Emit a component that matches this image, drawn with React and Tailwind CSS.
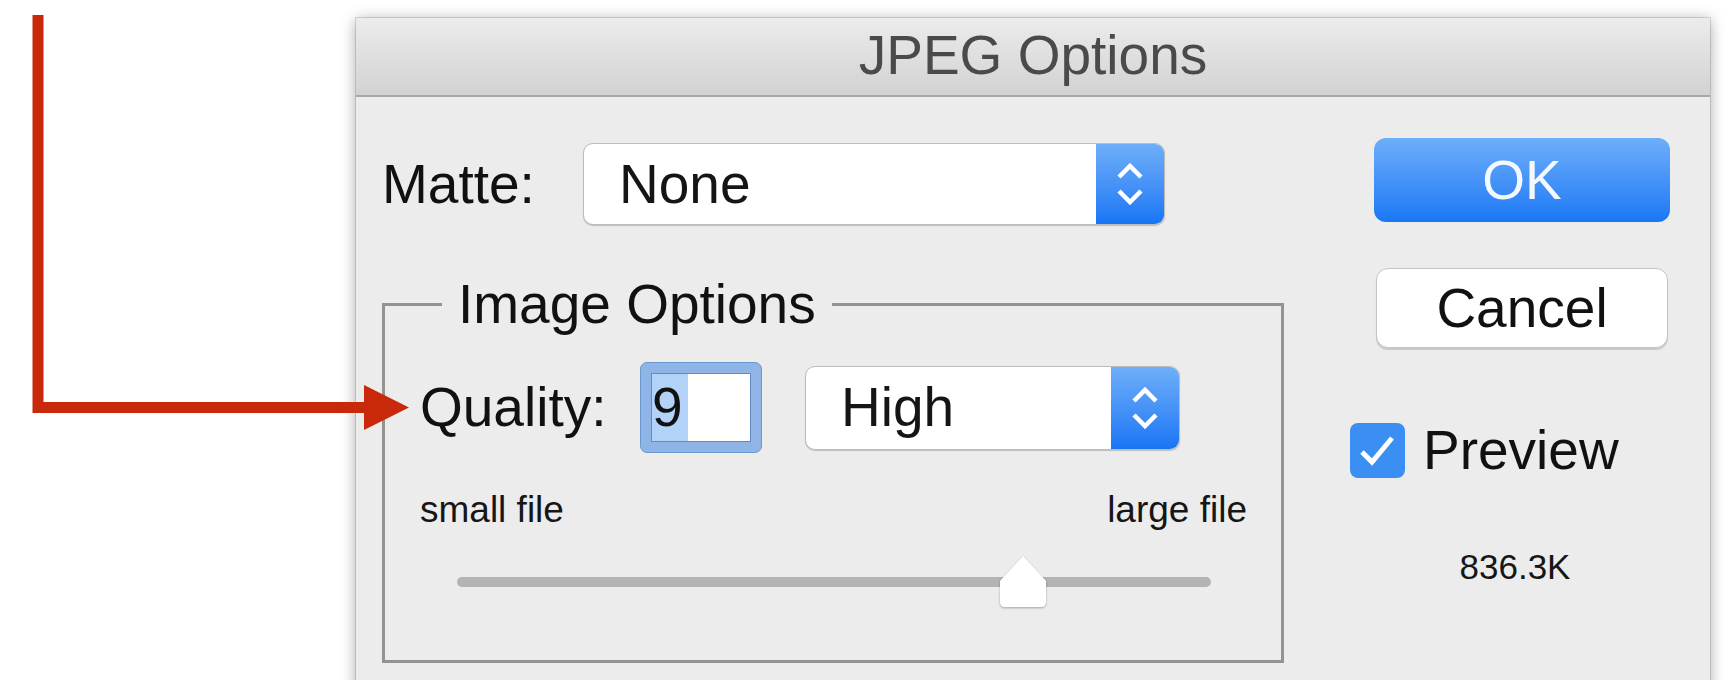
import React from 'react';

const QUALITY = 9;
const QUALITY_MAX = 12;

function Stepper() {
  return (
    <svg width="28" height="44" viewBox="0 0 28 44" fill="none">
      <path d="M3 15 L14 4 L25 15" stroke="white" strokeWidth="4.5" />
      <path d="M3 29 L14 40 L25 29" stroke="white" strokeWidth="4.5" />
    </svg>
  );
}

function PopUp({ value, className }) {
  return (
    <div className={`flex bg-white border border-[#bcbcbc] rounded-[10px] overflow-hidden shadow-[0_1px_1px_rgba(0,0,0,0.2)] ${className}`}>
      <div className="flex-1 flex items-center pl-[35px] text-[55px] leading-none text-[#151515]">{value}</div>
      <div className="w-[68px] flex items-center justify-center bg-gradient-to-b from-[#6eaef9] to-[#1675f4]">
        <Stepper />
      </div>
    </div>
  );
}

export default function App() {
  const pct = (QUALITY / QUALITY_MAX) * 100;

  return (
    <div className="relative w-[1730px] h-[680px] overflow-hidden bg-white pl-[356px] pt-[18px] font-['Liberation_Sans',Arial,sans-serif]">
      {/* Dialog window */}
      <div className="w-[1354px] h-[720px] bg-[#ececec] shadow-[0_0_0_1px_rgba(0,0,0,0.12),0_2px_14px_rgba(0,0,0,0.35)]">
        <div className="h-[79px] border-b-2 border-[#a8a8a8] bg-gradient-to-b from-[#ececec] to-[#d2d2d2] text-center text-[55px] leading-[75px] text-[#4a4a4a]">
          JPEG Options
        </div>

        <div className="flex pl-[26px]">
          {/* Left side: matte + image options */}
          <div className="w-[902px]">
            <div className="mt-[46px] flex items-center h-[82px]">
              <span className="w-[201px] text-[55px] leading-none text-[#111]">Matte:</span>
              <PopUp value="None" className="w-[582px] h-[82px]" />
            </div>

            <fieldset className="mt-[47px] border-[3px] border-[#939393]">
              <legend className="ml-[57px] px-[16px] text-[55px] leading-[64px] text-[#111]">Image Options</legend>
              <div className="pt-[26px] pl-[35px] pr-[34px] pb-[51px]">
                <div className="flex items-center h-[91px]">
                  <span className="w-[220px] text-[55px] leading-none text-[#111]">Quality:</span>
                  <div className="w-[122px] h-[91px] rounded-[7px] border border-[#6c98d2] bg-[#8fb5e6] p-[10px]">
                    <div className="h-full bg-white border border-[#5f8cc8] flex">
                      <span className="w-[36px] h-full bg-[#b2d2f8] flex items-center text-[55px] leading-none text-[#111]">9</span>
                    </div>
                  </div>
                  <PopUp value="High" className="ml-[43px] w-[375px] h-[84px]" />
                </div>

                <div className="mt-[37px] flex justify-between text-[37px] leading-[40px] text-[#161616]">
                  <span>small file</span>
                  <span>large file</span>
                </div>

                <div className="mt-[25px] h-[54px] ml-[37px] mr-[36px] relative flex items-center">
                  <div className="w-full h-[10px] rounded-full bg-[#b3b3b3]" />
                  <svg
                    className="absolute top-0 -translate-x-1/2 drop-shadow-[0_1px_1px_rgba(0,0,0,0.3)]"
                    style={{ left: `${pct}%` }}
                    width="54" height="54" viewBox="0 0 54 54"
                  >
                    <path d="M27 1 L50 26 L50 47 Q50 52 45 52 L9 52 Q4 52 4 47 L4 26 Z" fill="white" />
                  </svg>
                </div>
              </div>
            </fieldset>
          </div>

          {/* Right side: buttons + preview */}
          <div className="ml-[66px] w-[320px] flex flex-col">
            <button className="mt-[41px] self-end w-[296px] h-[84px] rounded-[12px] bg-gradient-to-b from-[#6caef9] to-[#1777f5] text-[#f4f8ff] text-[55px] leading-none">
              OK
            </button>
            <button className="mt-[46px] self-end mr-[2px] w-[292px] h-[80px] rounded-[12px] bg-white border border-[#c4c4c4] shadow-[0_2px_1px_rgba(0,0,0,0.15)] text-[55px] leading-none text-[#111]">
              Cancel
            </button>
            <div className="mt-[75px] flex items-center">
              <div className="w-[55px] h-[55px] rounded-[8px] bg-[#3b8ef2] flex items-center justify-center">
                <svg width="55" height="55" viewBox="0 0 55 55" fill="none">
                  <path d="M12 29 L22 39 L42 15" stroke="white" strokeWidth="5" />
                </svg>
              </div>
              <span className="ml-[18px] text-[55px] leading-none text-[#111]">Preview</span>
            </div>
            <div className="mt-[67px] self-end mr-[8px] w-[294px] text-center text-[35px] leading-[44px] text-[#161616]">836.3K</div>
          </div>
        </div>
      </div>

      {/* Callout arrow */}
      <svg className="absolute left-0 top-0 pointer-events-none" width="1730" height="680">
        <path d="M38 15 V407.5 H366" stroke="#c8290b" strokeWidth="11" fill="none" />
        <path d="M364 385 L409 407.5 L364 430 Z" fill="#c8290b" />
      </svg>
    </div>
  );
}
